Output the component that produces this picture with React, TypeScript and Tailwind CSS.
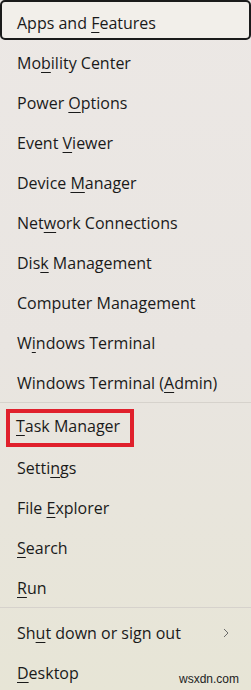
import React from 'react';

type Item = { before: string; key: string; after: string; sepBefore?: boolean; submenu?: boolean; focused?: boolean; marked?: boolean };

const ITEMS: Item[] = [
  { before: 'Apps and ', key: 'F', after: 'eatures', focused: true },
  { before: 'Mo', key: 'b', after: 'ility Center' },
  { before: 'Power ', key: 'O', after: 'ptions' },
  { before: 'Event ', key: 'V', after: 'iewer' },
  { before: 'Device ', key: 'M', after: 'anager' },
  { before: 'Net', key: 'w', after: 'ork Connections' },
  { before: 'Dis', key: 'k', after: ' Management' },
  { before: 'Computer Mana', key: 'g', after: 'ement' },
  { before: 'W', key: 'i', after: 'ndows Terminal' },
  { before: 'Windows Terminal (', key: 'A', after: 'dmin)' },
  { before: '', key: 'T', after: 'ask Manager', sepBefore: true, marked: true },
  { before: 'Setti', key: 'n', after: 'gs' },
  { before: 'File ', key: 'E', after: 'xplorer' },
  { before: '', key: 'S', after: 'earch' },
  { before: '', key: 'R', after: 'un' },
  { before: 'Sh', key: 'u', after: 't down or sign out', sepBefore: true, submenu: true },
  { before: '', key: 'D', after: 'esktop' },
];

const MenuRow = ({ item }: { item: Item }) => {
  const label = (
    <span className="whitespace-nowrap">
      {item.before}
      <span className="underline decoration-1 underline-offset-[3px]">{item.key}</span>
      {item.after}
    </span>
  );

  return (
    <>
      {item.sepBefore && <div className="my-[2px] h-px bg-[#d6d2cc]" />}
      <div
        className={
          item.focused
            ? 'flex h-10 items-center rounded-[5px] border-2 border-[#1b1b1b] bg-[#f2efea] pl-[15px] pt-[5px]'
            : 'flex h-10 items-center pl-[17px] pt-[5px]'
        }
      >
        {item.marked ? (
          <div className="-ml-[11px] flex h-[38px] w-[128px] items-center border-[4px] border-[#e0202c] pb-[3px] pl-[6px]">
            {label}
          </div>
        ) : (
          label
        )}
        {item.submenu && (
          <svg className="ml-auto mr-[22px]" width="6" height="10" viewBox="0 0 6 10" fill="none">
            <path d="M1 1l4 4-4 4" stroke="#6b6b6b" strokeWidth="1" />
          </svg>
        )}
      </div>
    </>
  );
};

export default function App() {
  return (
    <div
      className="relative h-[690px] w-[251px] overflow-hidden bg-gradient-to-b from-[#ece8e5] via-[#e9e5e1] to-[#e7e5d6] text-[16px] text-[#1a1a1a]"
      style={{ fontFamily: '"Open Sans", "Noto Sans", sans-serif' }}
    >
      <div className="flex flex-col">
        {ITEMS.map((item) => (
          <MenuRow key={item.before + item.key + item.after} item={item} />
        ))}
      </div>
      <div className="absolute bottom-[2px] right-[12px] text-[12px] text-[#222]" style={{ fontFamily: '"Liberation Sans", sans-serif' }}>
        wsxdn.com
      </div>
    </div>
  );
}
